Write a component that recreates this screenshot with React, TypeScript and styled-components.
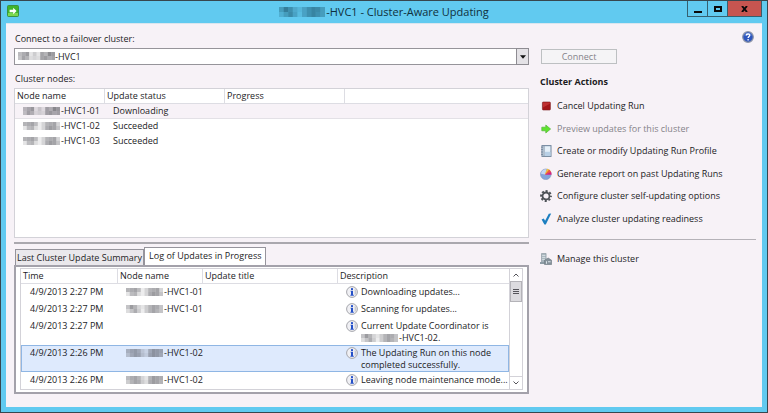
import React, { useState } from "react";
import styled, { createGlobalStyle, css } from "styled-components";

const GlobalStyle = createGlobalStyle`
  * { box-sizing: border-box; }
  html, body { margin: 0; }
  body, button, select, table {
    font-family: "Open Sans", "Segoe UI", sans-serif;
    font-size: 9px;
    line-height: 12px;
    color: #1c1c1e;
  }
  svg { display: block; flex: none; }
`;

const Window = styled.div`
  display: flex;
  flex-direction: column;
  min-height: 100vh;
  padding: 0 5px 5px;
  background: #61caf0;
  border: 1px solid #37474f;
`;

const TitleBar = styled.header`
  display: grid;
  grid-template-columns: 75px 1fr 75px;
  height: 22px;
`;

const AppIcon = styled.div`
  padding-top: 4px;
  padding-left: 1px;
`;

const Title = styled.h1`
  display: flex;
  align-items: center;
  justify-content: center;
  gap: 1px;
  margin: 0;
  font-size: 11px;
  font-weight: 400;
  color: #10303c;
`;

const Captions = styled.div`
  display: flex;
  align-items: flex-start;
  justify-content: flex-end;
`;

const CaptionButton = styled.button<{ $close?: boolean }>`
  display: flex;
  align-items: center;
  justify-content: center;
  width: ${(p) => (p.$close ? 36 : 21)}px;
  height: 16px;
  padding: 0;
  border: 1px solid #35606f;
  border-top: 0;
  border-right-width: ${(p) => (p.$close ? 1 : 0)}px;
  background: ${(p) => (p.$close ? "#c75550" : "transparent")};
`;

const Client = styled.main`
  display: flex;
  flex: 1;
  gap: 11px;
  padding: 7px 6px 13px 8px;
  background: #f7f2f7;
  border-top: 1px solid #d9e6ef;
`;

const Left = styled.section`
  display: flex;
  flex: 1;
  flex-direction: column;
  min-width: 0;
`;

const Right = styled.aside`
  display: flex;
  flex-direction: column;
  width: 216px;
`;

const FieldLabel = styled.label`
  display: block;
  margin: 2px 0 3px 1px;
`;

const GroupLabel = styled.h2`
  margin: 8px 0 3px 1px;
  font-size: 9px;
  font-weight: 400;
`;

const Combo = styled.div`
  position: relative;
`;

const ComboSelect = styled.select`
  appearance: none;
  display: block;
  width: 100%;
  height: 17px;
  padding: 0 20px 0 40px;
  border: 1px solid #96949a;
  border-radius: 0;
  background: #fff;
`;

const ComboMask = styled.span`
  position: absolute;
  top: 4px;
  left: 4px;
  pointer-events: none;
`;

const ComboArrow = styled.span`
  position: absolute;
  top: 0;
  right: 0;
  display: flex;
  align-items: center;
  justify-content: center;
  width: 13px;
  height: 17px;
  border: 1px solid #8e8c92;
  background: #e4e2e6;
  pointer-events: none;
`;

const NodeList = styled.div`
  flex: 1;
  min-height: 100px;
  border: 1px solid #d3d2d8;
  background: #fff;
`;

const Splitter = styled.hr`
  width: 100%;
  height: 2px;
  margin: 4px 0 3px;
  border: 0;
  background: #aaa8ae;
`;

const Table = styled.table`
  width: 100%;
  border-collapse: separate;
  border-spacing: 0;
  table-layout: fixed;
`;

const Col = styled.col<{ $w?: number }>`
  width: ${(p) => (p.$w ? `${p.$w}px` : "auto")};
`;

const Th = styled.th`
  height: 15px;
  padding: 1px 2px;
  border-right: 1px solid #dddde3;
  border-bottom: 1px solid #dddde3;
  font-weight: 400;
  text-align: left;
  white-space: nowrap;
  &:last-child { border-right: 0; }
`;

const NodeRow = styled.tr<{ $active?: boolean }>`
  & > td {
    height: 15px;
    padding: 1px 8px;
    background: ${(p) => (p.$active ? "#f7f2f7" : "transparent")};
    border-bottom: 1px solid ${(p) => (p.$active ? "#e3e1e6" : "transparent")};
    white-space: nowrap;
  }
`;

const LogRow = styled.tr<{ $selected?: boolean }>`
  & > td {
    height: 17px;
    padding: 1px 0 0 8px;
    vertical-align: top;
    white-space: nowrap;
    border: 1px solid transparent;
    border-width: 1px 0;
    ${(p) =>
      p.$selected &&
      css`
        background: #deeafd;
        border-color: #8fb6e4;
      `}
  }
  & > td:first-child { border-left-width: 1px; }
  & > td:last-child { border-right-width: 1px; }
`;

const NodeName = styled.span`
  display: flex;
  align-items: center;
  gap: 1px;
`;

const Tabs = styled.div`
  display: flex;
  align-items: flex-end;
  padding-left: 1px;
`;

const Tab = styled.button<{ $active: boolean }>`
  height: ${(p) => (p.$active ? 18 : 16)}px;
  padding: ${(p) => (p.$active ? "0 4px 1px" : "0 1px")};
  border: 1px solid #96949c;
  border-bottom: 0;
  background: ${(p) => (p.$active ? "#fff" : "#eae8ec")};
  white-space: nowrap;
`;

const LogPane = styled.div`
  padding: 1px 4px 2px;
  border: 2px solid #a3a1aa;
  background: #fff;
`;

const LogFrame = styled.div`
  display: flex;
  border: 1px solid #d3d2d8;
`;

const LogView = styled.div`
  flex: 1;
  min-width: 0;
`;

const Message = styled.span`
  display: flex;
  gap: 3px;
`;

const MessageText = styled.span`
  display: block;
`;

const ScrollBar = styled.div`
  display: flex;
  flex-direction: column;
  width: 13px;
  border-left: 1px solid #d3d2d8;
`;

const ScrollButton = styled.button`
  display: flex;
  align-items: center;
  justify-content: center;
  height: 12px;
  padding: 0;
  border: 0;
  background: #fff;
`;

const ScrollTrack = styled.div`
  flex: 1;
  border-bottom: 1px solid #d3d2d8;
`;

const ScrollThumb = styled.div`
  display: flex;
  align-items: center;
  justify-content: center;
  height: 21px;
  border: 1px solid #b4b3b8;
  background: #dcdbdf;
`;

const HelpButton = styled.button`
  align-self: flex-end;
  margin-right: 2px;
  padding: 0;
  border: 0;
  background: none;
`;

const ConnectButton = styled.button`
  width: 76px;
  height: 15px;
  margin: 6px 0 11px 1px;
  padding: 0;
  border: 1px solid #bdc0c2;
  background: #f5f4f6;
  color: #85838a;
`;

const ActionsHeading = styled.h2`
  margin: 0 0 6px;
  font-size: 9px;
  line-height: 14px;
  font-weight: 700;
`;

const ActionList = styled.div`
  display: flex;
  flex-direction: column;
`;

const Action = styled.button`
  display: flex;
  align-items: center;
  gap: 5px;
  height: 22px;
  margin-bottom: 1px;
  padding: 0;
  border: 0;
  background: none;
  text-align: left;
  white-space: nowrap;
  &:nth-child(even) { margin-bottom: 0; }
  &:disabled { color: #85838a; }
`;

const ActionRule = styled.hr`
  width: 100%;
  height: 1px;
  margin: 9px 0 8px;
  border: 0;
  background: #b5b2b8;
`;

const masks = [
  ["79b252a8db", "6a8343ab9a"],
  ["89a71489a4", "2783149ba6"],
  ["6b84258a96", "3695158a86"],
  ["79a8428ba9", "58a9539ba8"],
];

function Mask({ kind, wide, tint = "#3c3c44" }: { kind: number; wide?: boolean; tint?: string }) {
  return (
    <svg width={wide ? 46 : 37} height={wide ? 10 : 8} viewBox="0 0 40 8" preserveAspectRatio="none" aria-hidden="true">
      {masks[kind].map((line, y) =>
        line.split("").map((c, x) => (
          <rect key={`${x}-${y}`} x={x * 4} y={y * 4} width="4" height="4" fill={tint} opacity={0.05 + parseInt(c, 16) / 24} />
        ))
      )}
    </svg>
  );
}

const InfoIcon = () => (
  <svg width="12" height="12" viewBox="0 0 12 12">
    <circle cx="6" cy="6" r="5.4" fill="#f0f0f4" stroke="#a5a6ac" />
    <path d="M8.6 2.4a4.4 4.4 0 0 1 0 7.2z" fill="#c9cbd2" />
    <rect x="5" y="2" width="2" height="2" rx="0.6" fill="#2450c8" />
    <path d="M4.5 4.8H7v4h.8v.9H4.4v-.9H5V5.6h-.5z" fill="#2450c8" />
  </svg>
);

const StopIcon = () => (
  <svg width="12" height="12" viewBox="0 0 12 12">
    <rect x="2.4" y="2" width="8" height="8" rx="0.8" fill="#a31518" stroke="#7e2022" strokeWidth="0.6" />
    <path d="M3 2.6h6.8v1.2L3 7.4z" fill="#c8393a" opacity="0.75" />
  </svg>
);

const ArrowIcon = () => (
  <svg width="12" height="12" viewBox="0 0 12 12">
    <path d="M1.8 4.2h4V2l4.8 4-4.8 4V7.8h-4z" fill="#5fe32f" stroke="#51b536" strokeWidth="0.7" strokeLinejoin="round" />
  </svg>
);

const ProfileIcon = () => (
  <svg width="12" height="12" viewBox="0 0 12 12">
    <rect x="2" y="0.6" width="9" height="10.8" fill="#dbe9f5" stroke="#70849b" />
    <path d="M4 1v10" stroke="#8494a7" />
    <path d="M5.2 3h5M5.2 5h5" stroke="#f7fbff" strokeWidth="0.8" />
    <path d="M5 7h5.5v4H5z" fill="#b8d0e6" />
    <path d="M1 2.2h2M1 4.6h2M1 7h2M1 9.4h2" stroke="#6d7f93" strokeWidth="0.8" />
  </svg>
);

const ReportIcon = () => (
  <svg width="12" height="12" viewBox="0 0 12 12">
    <circle cx="5.8" cy="6.3" r="5.3" fill="#83a4dc" stroke="#8090b8" strokeWidth="0.6" />
    <path d="M5.2 6.6 1 5.8A4.8 4.8 0 0 1 6.5 1.2z" fill="#c5d6f3" />
    <path d="M4.8 6.8 7 .8a5.6 5.6 0 0 1 3 1.7z" fill="#f4c33a" />
    <path d="M4.8 6.8 9.2 1.6a5.6 5.6 0 0 1 2 2.6z" fill="#ef5a3d" />
    <path d="M4.8 6.8 11 3.8a5 5 0 0 1 .5 3z" fill="#d8257f" />
  </svg>
);

const GearIcon = () => (
  <svg width="12" height="12" viewBox="0 0 12 12">
    <circle cx="6" cy="6" r="4.9" fill="none" stroke="#4d5256" strokeWidth="2" strokeDasharray="2.1 1.75" strokeDashoffset="1" />
    <circle cx="6" cy="6" r="3.5" fill="none" stroke="#4d5256" strokeWidth="1.8" />
  </svg>
);

const CheckIcon = () => (
  <svg width="12" height="12" viewBox="0 0 12 12">
    <path d="M1.6 6.4 3.8 5.4 5.1 7.8 8.8.8 11.2.5 5.8 11.5H4.4z" fill="#1c7fc0" />
  </svg>
);

const ServerIcon = () => (
  <svg width="12" height="12" viewBox="0 0 12 12">
    <path d="M1.5.5h4.6v10H1.5z" fill="#a7b4bc" stroke="#85939c" strokeWidth="0.6" />
    <path d="M2.2 2.4h3.2M2.2 4.4h3.2M2.2 6.4h3.2" stroke="#e4ebef" strokeWidth="0.8" />
    <path d="M0 11V9h4v2z" fill="#8d9ca5" />
    <path d="M4.5 7.2 8.2 5l3.4 2.2v4.3H4.5z" fill="#84919a" stroke="#68757e" strokeWidth="0.6" />
    <path d="M6 8.2h1v2.6H6zM8 8.2h2.6v1H8z" fill="#dbe4e9" />
  </svg>
);

const nodes = [
  { mask: 0, name: "-HVC1-01", status: "Downloading" },
  { mask: 1, name: "-HVC1-02", status: "Succeeded" },
  { mask: 1, name: "-HVC1-03", status: "Succeeded" },
];

const log = [
  { time: "4/9/2013 2:27 PM", mask: 1, node: "-HVC1-01", lines: ["Downloading updates..."] },
  { time: "4/9/2013 2:27 PM", mask: 2, node: "-HVC1-01", lines: ["Scanning for updates..."] },
  { time: "4/9/2013 2:27 PM", mask: 0, node: "", lines: ["Current Update Coordinator is"], host: "-HVC1-02." },
  { time: "4/9/2013 2:26 PM", mask: 3, node: "-HVC1-02", lines: ["The Updating Run on this node", "completed successfully."] },
  { time: "4/9/2013 2:26 PM", mask: 3, node: "-HVC1-02", lines: ["Leaving node maintenance mode..."] },
];

const actions = [
  { icon: <StopIcon />, label: "Cancel Updating Run" },
  { icon: <ArrowIcon />, label: "Preview updates for this cluster", disabled: true },
  { icon: <ProfileIcon />, label: "Create or modify Updating Run Profile" },
  { icon: <ReportIcon />, label: "Generate report on past Updating Runs" },
  { icon: <GearIcon />, label: "Configure cluster self-updating options" },
  { icon: <CheckIcon />, label: "Analyze cluster updating readiness" },
];

export default function App() {
  const [selected, setSelected] = useState(3);
  return (
    <Window>
      <GlobalStyle />
      <TitleBar>
        <AppIcon>
          <svg width="12" height="12" viewBox="0 0 12 12">
            <rect x="0.5" y="0.5" width="11" height="11" rx="1" fill="#3fb52c" stroke="#3a9440" />
            <path d="M1 8h10v3H1z" fill="#7bd850" />
            <path d="M2.6 4.7h3.6V2.8L9.6 6 6.2 9.2V7.3H2.6z" fill="#fff" />
          </svg>
        </AppIcon>
        <Title>
          <Mask kind={2} wide tint="#083448" />
          -HVC1 - Cluster-Aware Updating
        </Title>
        <Captions>
          <CaptionButton aria-label="Minimize">
            <svg width="8" height="8" viewBox="0 0 8 8"><path d="M0 6h8v2H0z" fill="#0a0a0a" /></svg>
          </CaptionButton>
          <CaptionButton aria-label="Maximize">
            <svg width="8" height="6" viewBox="0 0 8 6"><path d="M1 1h6v4H1z" fill="none" stroke="#0a0a0a" strokeWidth="2" /></svg>
          </CaptionButton>
          <CaptionButton $close aria-label="Close">
            <svg width="7" height="6" viewBox="0 0 7 6"><path d="M1 0 6 6M6 0 1 6" stroke="#0a0a0a" strokeWidth="1.9" /></svg>
          </CaptionButton>
        </Captions>
      </TitleBar>
      <Client>
        <Left>
          <FieldLabel htmlFor="cluster">Connect to a failover cluster:</FieldLabel>
          <Combo>
            <ComboSelect id="cluster">
              <option>-HVC1</option>
            </ComboSelect>
            <ComboMask><Mask kind={0} /></ComboMask>
            <ComboArrow>
              <svg width="6" height="4" viewBox="0 0 6 4"><path d="M0 .3h6L3 3.7z" fill="#111" /></svg>
            </ComboArrow>
          </Combo>
          <GroupLabel id="nodes-label">Cluster nodes:</GroupLabel>
          <NodeList>
            <Table aria-labelledby="nodes-label">
              <colgroup><Col $w={90} /><Col $w={120} /><Col $w={120} /><Col /></colgroup>
              <thead>
                <tr><Th>Node name</Th><Th>Update status</Th><Th>Progress</Th><Th /></tr>
              </thead>
              <tbody>
                {nodes.map((n, i) => (
                  <NodeRow key={n.name} $active={i === 0}>
                    <td><NodeName><Mask kind={n.mask} />{n.name}</NodeName></td>
                    <td>{n.status}</td>
                    <td />
                    <td />
                  </NodeRow>
                ))}
              </tbody>
            </Table>
          </NodeList>
          <Splitter />
          <Tabs role="tablist">
            <Tab role="tab" aria-selected={false} $active={false}>Last Cluster Update Summary</Tab>
            <Tab role="tab" aria-selected $active>Log of Updates in Progress</Tab>
          </Tabs>
          <LogPane role="tabpanel">
            <LogFrame>
              <LogView>
                <Table>
                  <colgroup><Col $w={97} /><Col $w={85} /><Col $w={135} /><Col /></colgroup>
                  <thead>
                    <tr><Th>Time</Th><Th>Node name</Th><Th>Update title</Th><Th>Description</Th></tr>
                  </thead>
                  <tbody>
                    {log.map((e, i) => (
                      <LogRow key={i} $selected={i === selected} onClick={() => setSelected(i)}>
                        <td>{e.time}</td>
                        <td>{e.node && <NodeName><Mask kind={e.mask} />{e.node}</NodeName>}</td>
                        <td />
                        <td>
                          <Message>
                            <InfoIcon />
                            <span>
                              {e.lines.map((l) => <MessageText key={l}>{l}</MessageText>)}
                              {e.host && <NodeName><Mask kind={2} />{e.host}</NodeName>}
                            </span>
                          </Message>
                        </td>
                      </LogRow>
                    ))}
                  </tbody>
                </Table>
              </LogView>
              <ScrollBar>
                <ScrollButton aria-label="Scroll up">
                  <svg width="6" height="4" viewBox="0 0 6 4"><path d="M.5 3.5 3 1l2.5 2.5" fill="none" stroke="#55545a" /></svg>
                </ScrollButton>
                <ScrollTrack>
                  <ScrollThumb>
                    <svg width="6" height="6" viewBox="0 0 6 6"><path d="M0 .5h6M0 2.5h6M0 4.5h6" stroke="#55545a" /></svg>
                  </ScrollThumb>
                </ScrollTrack>
                <ScrollButton aria-label="Scroll down">
                  <svg width="6" height="4" viewBox="0 0 6 4"><path d="M.5.5 3 3 5.5.5" fill="none" stroke="#55545a" /></svg>
                </ScrollButton>
              </ScrollBar>
            </LogFrame>
          </LogPane>
        </Left>
        <Right>
          <HelpButton aria-label="Help">
            <svg width="12" height="12" viewBox="0 0 12 12">
              <circle cx="6" cy="6" r="5.3" fill="#2d55bd" stroke="#8d95a8" strokeWidth="1.2" />
              <path d="M2 4.6a4.2 4.2 0 0 1 8 0z" fill="#6f93e0" opacity="0.7" />
              <path d="M4.3 4.6C4.3 2.4 7.8 2.5 7.7 4.5 7.6 5.7 6.1 5.6 6.1 7M6.1 8.1v1.3" fill="none" stroke="#fff" strokeWidth="1.3" />
            </svg>
          </HelpButton>
          <ConnectButton disabled>Connect</ConnectButton>
          <ActionsHeading>Cluster Actions</ActionsHeading>
          <ActionList>
            {actions.map((a) => (
              <Action key={a.label} disabled={a.disabled}>{a.icon}{a.label}</Action>
            ))}
          </ActionList>
          <ActionRule />
          <Action><ServerIcon />Manage this cluster</Action>
        </Right>
      </Client>
    </Window>
  );
}
